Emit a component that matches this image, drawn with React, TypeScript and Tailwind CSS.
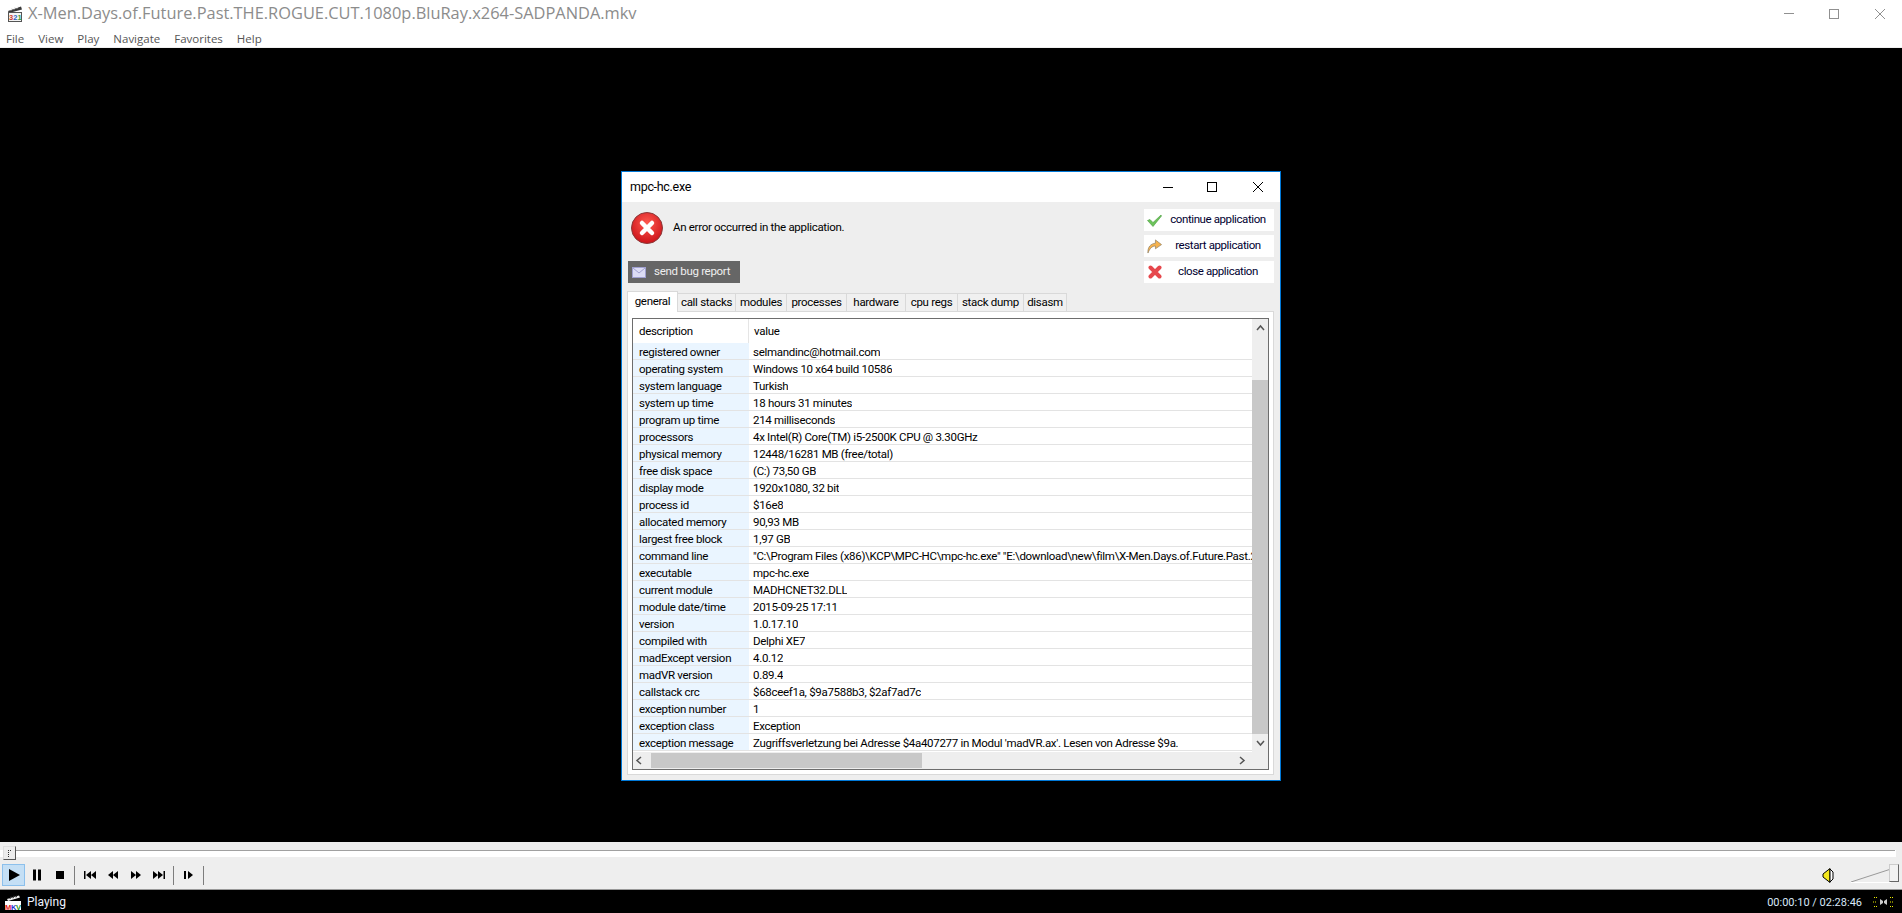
import React from 'react';

const rows: [string, string][] = [
  ['registered owner', 'selmandinc@hotmail.com'],
  ['operating system', 'Windows 10 x64 build 10586'],
  ['system language', 'Turkish'],
  ['system up time', '18 hours 31 minutes'],
  ['program up time', '214 milliseconds'],
  ['processors', '4x Intel(R) Core(TM) i5-2500K CPU @ 3.30GHz'],
  ['physical memory', '12448/16281 MB (free/total)'],
  ['free disk space', '(C:) 73,50 GB'],
  ['display mode', '1920x1080, 32 bit'],
  ['process id', '$16e8'],
  ['allocated memory', '90,93 MB'],
  ['largest free block', '1,97 GB'],
  ['command line', '"C:\\Program Files (x86)\\KCP\\MPC-HC\\mpc-hc.exe" "E:\\download\\new\\film\\X-Men.Days.of.Future.Past.2014'],
  ['executable', 'mpc-hc.exe'],
  ['current module', 'MADHCNET32.DLL'],
  ['module date/time', '2015-09-25 17:11'],
  ['version', '1.0.17.10'],
  ['compiled with', 'Delphi XE7'],
  ['madExcept version', '4.0.12'],
  ['madVR version', '0.89.4'],
  ['callstack crc', '$68ceef1a, $9a7588b3, $2af7ad7c'],
  ['exception number', '1'],
  ['exception class', 'Exception'],
  ['exception message', "Zugriffsverletzung bei Adresse $4a407277 in Modul 'madVR.ax'. Lesen von Adresse $9a."],
];

const menus = ['File', 'View', 'Play', 'Navigate', 'Favorites', 'Help'];

const tabs = [
  { label: 'call stacks', width: 'w-[58px]' },
  { label: 'modules', width: 'w-[51px]' },
  { label: 'processes', width: 'w-[60px]' },
  { label: 'hardware', width: 'w-[59px]' },
  { label: 'cpu regs', width: 'w-[52px]' },
  { label: 'stack dump', width: 'w-[66px]' },
  { label: 'disasm', width: 'w-[43px]' },
];

const MpcIcon = () => (
  <svg width="16" height="16" viewBox="0 0 16 16">
    <path d="M1 5L14 0.5L15 3.5L2 7Z" fill="#3a3a3a" />
    <path d="M4 4.5l1-2.5M7 3.5l1-2.5M10 2.5l1-2" stroke="#e5e5e5" />
    <rect x="1.5" y="6.5" width="13" height="9" fill="#f4f4f4" stroke="#555" />
    <text x="2" y="14" fontSize="7.5" fontWeight="700" fontFamily="Liberation Sans" fill="#d23a2a">3</text>
    <text x="6.2" y="14" fontSize="7.5" fontWeight="700" fontFamily="Liberation Sans" fill="#2a62c0">2</text>
    <text x="10.4" y="14" fontSize="7.5" fontWeight="700" fontFamily="Liberation Sans" fill="#3a9a3a">1</text>
  </svg>
);

const MkvIcon = () => (
  <svg width="16" height="15" viewBox="0 0 16 15">
    <path d="M2 4L14 0.5L15 2.5L3 6Z" fill="#eee" />
    <path d="M5 4l1-2.5M8 3.2l1-2.5M11 2.4l1-2" stroke="#333" />
    <rect x="0" y="6" width="16" height="9" fill="#fff" />
    <text x="0" y="14.5" fontSize="7.5" fontWeight="700" fontFamily="Liberation Sans" fill="#e22020">M</text>
    <text x="6" y="14.5" fontSize="7.5" fontWeight="700" fontFamily="Liberation Sans" fill="#2030d0">K</text>
    <text x="11" y="14.5" fontSize="7.5" fontWeight="700" fontFamily="Liberation Sans" fill="#209020">V</text>
  </svg>
);

const Transport = ({ d, active }: { d: string; active?: boolean }) => (
  <div className={`w-[23px] h-[22px] flex items-center justify-center ${active ? 'bg-[#c4dff5] border border-[#8cc0ec]' : ''}`}>
    <svg width="14" height="14" viewBox="0 0 14 14" fill="#000">
      <path d={d} />
    </svg>
  </div>
);

const Sep = () => <div className="w-px h-[19px] bg-[#7d7d7d] mx-[3px]" />;

const ActionButton = ({ icon, label }: { icon: React.ReactNode; label: string }) => (
  <div className="w-[130px] h-[22px] bg-white flex items-center pl-[3px] text-[#000030]">
    <div className="w-[15px] flex justify-center shrink-0">{icon}</div>
    <span className="flex-1 text-center whitespace-nowrap tracking-[-0.4px]">{label}</span>
  </div>
);

const App: React.FC = () => {
  return (
    <div className="w-[1902px] h-[913px] bg-black flex flex-col overflow-hidden text-[12px] leading-none font-['Open_Sans',sans-serif]">
      {/* main window title + menu */}
      <div className="h-[27px] bg-white flex items-center shrink-0">
        <div className="w-[7px]" />
        <MpcIcon />
        <span className="ml-[5px] text-[16.4px] text-[#8c8c8c] whitespace-nowrap">X-Men.Days.of.Future.Past.THE.ROGUE.CUT.1080p.BluRay.x264-SADPANDA.mkv</span>
        <div className="ml-auto flex items-center mr-[17px]">
          <div className="w-[10px] h-px bg-[#909090] mr-[35px]" />
          <div className="w-[10px] h-[10px] border border-[#909090] mr-[36px]" />
          <svg width="10" height="10" viewBox="0 0 10 10" stroke="#909090" fill="none">
            <path d="M0 0L10 10M10 0L0 10" />
          </svg>
        </div>
      </div>
      <div className="h-[20px] bg-white flex items-center pt-[3px] pl-[6px] gap-[14px] text-[11.5px] text-[#555] shrink-0">
        {menus.map((m) => (
          <span key={m}>{m}</span>
        ))}
      </div>
      <div className="h-px bg-[#f0f0f0] shrink-0" />

      {/* video area with dialog */}
      <div className="flex-1 flex justify-center items-start pt-[123px]">
        <div className="w-[660px] h-[610px] border border-[#0078d7] bg-[#eeeeee] flex flex-col text-black font-['Roboto',sans-serif] text-[11.5px] tracking-[-0.3px]">
          <div className="h-[30px] bg-white flex items-center pl-2 shrink-0">
            <span className="text-[12.5px]">mpc-hc.exe</span>
            <div className="ml-auto flex items-center mr-[17px]">
              <div className="w-[10px] h-px bg-black mr-[34px]" />
              <div className="w-[10px] h-[10px] border border-black mr-[36px]" />
              <svg width="10" height="10" viewBox="0 0 10 10" stroke="#000" fill="none">
                <path d="M0 0L10 10M10 0L0 10" />
              </svg>
            </div>
          </div>

          <div className="flex justify-between h-[89px] shrink-0">
            <div className="flex flex-col pl-[6px]">
              <div className="flex items-center mt-[10px] ml-[3px]">
                <svg width="32" height="32" viewBox="0 0 32 32">
                  <defs>
                    <radialGradient id="errFill" cx="50%" cy="35%" r="70%">
                      <stop offset="0%" stopColor="#ff5a50" />
                      <stop offset="100%" stopColor="#c80c14" />
                    </radialGradient>
                  </defs>
                  <circle cx="16" cy="16" r="15.5" fill="url(#errFill)" stroke="#8a3a3a" />
                  <path d="M11 11L21 21M21 11L11 21" stroke="#fff" strokeWidth="4.5" strokeLinecap="round" />
                </svg>
                <span className="ml-[10px] whitespace-nowrap">An error occurred in the application.</span>
              </div>
              <div className="mt-[17px] w-[112px] h-[22px] bg-[#666666] text-white flex items-center">
                <svg className="ml-[4px]" width="14" height="11" viewBox="0 0 14 11">
                  <rect x="0.5" y="0.5" width="13" height="10" fill="#dcdcf4" stroke="#a0a0d0" />
                  <path d="M1 1L7 6L13 1" fill="none" stroke="#a0a0d0" />
                </svg>
                <span className="ml-[8px] text-[#eee] whitespace-nowrap">send bug report</span>
              </div>
            </div>
            <div className="flex flex-col gap-1 mt-[7px] mr-[6px]">
              <ActionButton
                label="continue application"
                icon={
                  <svg width="15" height="13" viewBox="0 0 15 13">
                    <path d="M0.5 6.5L3 5.5L6 8.5L14 1L14.5 2L6 12.5Z" fill="#6cc45a" stroke="#4a9a40" strokeWidth="0.6" />
                  </svg>
                }
              />
              <ActionButton
                label="restart application"
                icon={
                  <svg width="16" height="16" viewBox="0 0 16 16">
                    <path d="M1 15.5C0.5 9 4 5.5 9 5V1.5L15.5 6.5L9 11V8C5.5 8 3 10.5 1 15.5Z" fill="#f5b24e" stroke="#8a7a60" strokeWidth="0.7" />
                  </svg>
                }
              />
              <ActionButton
                label="close application"
                icon={
                  <svg width="14" height="14" viewBox="0 0 14 14">
                    <path d="M2.5 2.5L11.5 11.5M11.5 2.5L2.5 11.5" stroke="#e6474c" strokeWidth="4" strokeLinecap="round" />
                  </svg>
                }
              />
            </div>
          </div>

          {/* tabs */}
          <div className="flex items-end pl-[5px] h-[21px] shrink-0 -mb-px relative z-10">
            <div className="w-[51px] h-[21px] bg-white border border-b-0 border-[#d9d9d9] flex items-center justify-center pb-px">general</div>
            {tabs.map((t) => (
              <div key={t.label} className={`${t.width} h-[19px] pt-px bg-[#f0f0f0] border border-l-0 border-[#d9d9d9] flex items-center justify-center whitespace-nowrap`}>
                {t.label}
              </div>
            ))}
          </div>

          <div className="flex-1 ml-[5px] mr-[6px] mb-[5px] bg-white border border-[#d9d9d9] pt-[6px] px-[4px] pb-[4px] flex min-h-0">
            <div className="flex-1 border border-[#6d6d6d] flex min-h-0 min-w-0">
              <div className="flex-1 flex flex-col min-w-0">
                <div className="flex-1 flex flex-col min-h-0 overflow-hidden">
                  <div className="h-[24px] flex items-center shrink-0">
                    <div className="w-[116px] h-full flex items-center pl-[6px] pt-px border-r border-[#e5e5e5]">description</div>
                    <div className="pl-[5px] pt-px">value</div>
                  </div>
                  {rows.map(([k, v]) => (
                    <div key={k} className="h-[17px] flex shrink-0 border-b border-[#e3e3e3]">
                      <div className="w-[116px] bg-[#eaf5ff] flex items-center pl-[6px] pt-[3px] shrink-0">{k}</div>
                      <div className="pl-[4px] pt-[3px] flex items-center whitespace-nowrap overflow-hidden">{v}</div>
                    </div>
                  ))}
                </div>
                {/* horizontal scrollbar */}
                <div className="h-[17px] bg-[#eeeeee] flex items-center shrink-0">
                  <svg className="ml-[2px]" width="8" height="9" viewBox="0 0 8 9" fill="none" stroke="#555" strokeWidth="1.5">
                    <path d="M6 1L2 4.5L6 8" />
                  </svg>
                  <div className="ml-[8px] w-[271px] h-[15px] bg-[#c8c8c8]" />
                  <svg className="ml-auto mr-[6px]" width="8" height="9" viewBox="0 0 8 9" fill="none" stroke="#555" strokeWidth="1.5">
                    <path d="M2 1L6 4.5L2 8" />
                  </svg>
                </div>
              </div>
              {/* vertical scrollbar */}
              <div className="w-[16px] bg-[#eeeeee] flex flex-col items-center shrink-0 pb-[17px]">
                <svg className="mt-[5px]" width="9" height="8" viewBox="0 0 9 8" fill="none" stroke="#555" strokeWidth="1.5">
                  <path d="M1 6L4.5 2L8 6" />
                </svg>
                <div className="mt-[48px] w-full flex-1 bg-[#c8c8c8]" />
                <svg className="my-[5px]" width="9" height="8" viewBox="0 0 9 8" fill="none" stroke="#555" strokeWidth="1.5">
                  <path d="M1 2L4.5 6L8 2" />
                </svg>
              </div>
            </div>
          </div>
        </div>
      </div>

      {/* seek bar */}
      <div className="h-[15px] bg-[#eeeeee] relative shrink-0">
        <div className="absolute left-0 right-[6px] top-[8px] h-[7px] bg-white" />
        <div className="absolute left-[3px] right-[7px] top-[8px] h-px bg-[#a0a0a0]" />
        <div className="absolute left-[3px] top-[4px] w-[13px] h-[14px] bg-[#ececec] border border-[#ddd] border-r-[#555] border-b-[#555] z-10 flex items-center justify-center">
          <div className="w-[3px] h-[7px] border-l border-t border-dotted border-[#333]" />
        </div>
      </div>

      {/* transport controls */}
      <div className="h-[33px] bg-[#eeeeee] border-b border-[#999] flex items-center pt-[4px] pl-[2px] shrink-0">
        <Transport active d="M2 1L13 7L2 13Z" />
        <Transport d="M3 1.5H6V12.5H3ZM8 1.5H11V12.5H8Z" />
        <Transport d="M3 3H11V11H3Z" />
        <Sep />
        <Transport d="M1 3H2.5V11H1ZM8 3V11L3 7ZM13 3V11L8 7Z" />
        <Transport d="M7 3V11L2 7ZM12 3V11L7 7Z" />
        <Transport d="M2 3V11L7 7ZM7 3V11L12 7Z" />
        <Transport d="M1 3V11L6 7ZM6 3V11L11 7ZM11.5 3H13V11H11.5Z" />
        <Sep />
        <Transport d="M2 3H4V11H2ZM6 3V11L11 7Z" />
        <Sep />
        <div className="ml-auto flex items-center mr-[3px] mb-[4px]">
          <svg className="mt-[4px]" width="12" height="17" viewBox="0 0 12 17">
            <path d="M1 7L8 1.5V15.5L1 10Z" fill="#f4e81c" stroke="#000" strokeWidth="1" />
            <path d="M8 2L11 5V12L8 15Z" fill="#fff" stroke="#000" strokeWidth="1" />
          </svg>
          <div className="relative ml-[17px] w-[48px] h-[18px]">
            <svg className="absolute left-0 top-0" width="48" height="19" viewBox="0 0 48 19" fill="none">
              <path d="M0 18L40 5" stroke="#999" />
              <path d="M0 18.5H40" stroke="#fff" />
            </svg>
            <div className="absolute right-0 top-0 w-[10px] h-[18px] bg-[#f2f2f2] border border-[#666] border-l-[#ccc] border-t-[#ccc]" />
          </div>
        </div>
      </div>

      {/* status bar */}
      <div className="h-[23px] bg-black flex items-center pt-px shrink-0 text-white font-['Roboto',sans-serif]">
        <div className="ml-[5px] flex"><MkvIcon /></div>
        <span className="ml-[6px] text-[12px] text-[#eef2ff]">Playing</span>
        <span className="ml-auto text-[11px] text-[#d8e8f8]">00:00:10 / 02:28:46</span>
        <svg className="ml-[11px] mr-[8px]" width="21" height="12" viewBox="0 0 21 12" fill="none">
          <path d="M7 3L10 5V7L7 9ZM14 3L11 5V7L14 9Z" fill="#ccc" />
          <path d="M1 1.5H4M0 6H4M1 10.5H4M17 1.5H20M17 6H21M17 10.5H20" stroke="#ee0" strokeDasharray="1 1" />
        </svg>
      </div>
    </div>
  );
};

export default App;
